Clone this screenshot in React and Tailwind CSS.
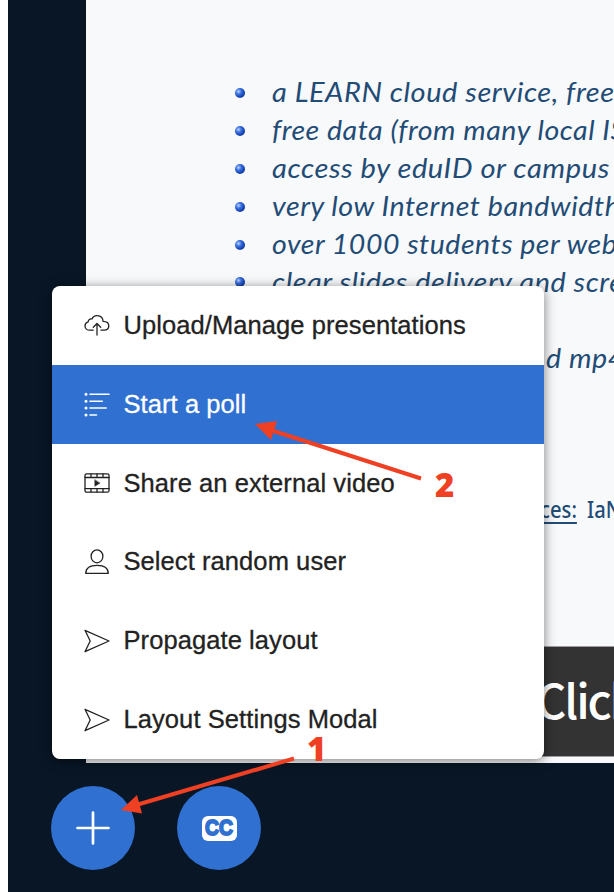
import React from "react";

const bullets = [
  { text: "a LEARN cloud service, free", scale: "scale-x-[1.093]" },
  { text: "free data (from many local IS", scale: "scale-x-[1.076]" },
  { text: "access by eduID or campus", scale: "scale-x-[1.098]" },
  { text: "very low Internet bandwidth", scale: "scale-x-[1.08]" },
  { text: "over 1000 students per web", scale: "scale-x-[1.074]" },
  { text: "clear slides delivery and scre", scale: "scale-x-[1.088]" },
];

function Icon({ children }) {
  return (
    <svg className="size-[26px] shrink-0" viewBox="0 0 26 26" fill="none" stroke="currentColor" strokeWidth="1.3" strokeLinecap="round" strokeLinejoin="round">
      {children}
    </svg>
  );
}

const Upload = () => (
  <Icon>
    <path d="M9.2 18.2H5.8C3 18.2 1 16.4 1 13.9c0-2 1.3-3.6 3.2-4.1.1-2.1 1.6-3.3 3.8-2.9C9 4.6 11 3.4 13.4 3.6c3.3.2 5.5 2.5 5.7 5.8 3.5.1 5.7 1.7 5.7 4.4 0 2.6-1.9 4.4-4.7 4.4H17M13 23V11.8M9.3 15.2 13 11.5l3.7 3.7" />
  </Icon>
);
const Poll = () => (
  <Icon>
    <path strokeWidth="1.6" d="M6 3.2h19M6 10.2h12.3M6 17h16.2M6 24h6.5" />
    <path strokeWidth="3" d="M2 3.2h.01M2 10.2h.01M2 17h.01M2 24h.01" />
  </Icon>
);
const Film = () => (
  <Icon>
    <rect x="1" y="3.8" width="24" height="18.4" rx="1.5" />
    <path d="M1 7.5h24M1 18.7h24M7 4v3.5M13 4v3.5M19 4v3.5M7 18.7V22M13 18.7V22M19 18.7V22" />
    <path fill="currentColor" strokeWidth=".5" d="M10.8 10v6.3l5-3.15z" />
  </Icon>
);
const User = () => (
  <Icon>
    <ellipse cx="13" cy="7.3" rx="5.9" ry="6.5" />
    <path strokeLinejoin="miter" d="M1.8 24.3c0-5 4-8 11.2-8s11.2 3 11.2 8z" />
  </Icon>
);
const Send = () => (
  <Icon>
    <path d="M1 2.3 25 13 1 23.7 6.2 13z" />
  </Icon>
);

const items = [
  { label: "Upload/Manage presentations", icon: Upload },
  { label: "Start a poll", icon: Poll, active: true },
  { label: "Share an external video", icon: Film },
  { label: "Select random user", icon: User },
  { label: "Propagate layout", icon: Send },
  { label: "Layout Settings Modal", icon: Send },
];

const slideText = "inline-block origin-left pb-[1px]";

function Slide() {
  return (
    <main className="ml-[78px] flex h-[763px] flex-col overflow-hidden whitespace-nowrap bg-[#f8f9fb] text-[#224c75]">
      <ul className="pl-[149px] pt-[74px] font-['Lato',sans-serif] text-[26.5px] italic leading-[38px] tracking-[0.5px]">
        {bullets.map(({ text, scale }) => (
          <li key={text} className="flex h-[37.9px] items-center">
            <span className="mr-[26.5px] size-[10px] shrink-0 rounded-full bg-[radial-gradient(circle_at_35%_35%,#b9d2ff_0,#3c72e0_30%,#1746b5_60%,#0c2468_100%)]" />
            <span className={`${slideText} ${scale}`}>{text}</span>
          </li>
        ))}
      </ul>
      <p className="mt-[38px] pl-[460px] font-['Lato',sans-serif] text-[26.5px] italic leading-[38px] tracking-[0.5px]">
        <span className={`${slideText} scale-x-[1.08]`}>d mp4</span>
      </p>
      <p className="mt-[112px] flex gap-[9px] pl-[446px] font-['Noto_Sans',sans-serif] text-[24px] font-medium leading-[38px]">
        <span className="w-[46px]">
          <span className="inline-block origin-left scale-x-[.84] underline decoration-2 underline-offset-[4px]">rces:</span>
        </span>
        <span className="inline-block origin-left scale-x-[.84]">IaN</span>
      </p>
      <div className="mt-auto mb-[6px] h-[111px] border-y border-[#a09ca2] bg-[#333] pl-[450px] font-['Noto_Sans_CJK_SC',sans-serif] text-[47px] font-medium leading-[104px] tracking-[-2.1px] text-white">
        Click
      </div>
    </main>
  );
}

export default function App() {
  return (
    <div className="relative h-[892px] w-[614px] overflow-hidden bg-white pl-2">
      <div className="flex h-full flex-col bg-[#081626]">
        <Slide />
        <footer className="flex gap-[42px] pl-[43px] pt-[23px]">
          <button className="flex size-[84px] items-center justify-center rounded-full bg-[#2f70d1]">
            <svg className="size-[34px]" viewBox="0 0 34 34" stroke="white" strokeWidth="2.7" strokeLinecap="round">
              <path d="M17 1.5v31M1.5 17h31" />
            </svg>
          </button>
          <button className="flex size-[84px] items-center justify-center rounded-full bg-[#2f70d1]">
            <span className="flex h-[25px] w-[35px] items-center justify-center rounded-[6px] bg-white font-['Liberation_Sans',sans-serif] text-[22px] font-bold leading-none text-[#2f70d1]">
              <span className="scale-x-[.88] [-webkit-text-stroke:1.8px_#2f70d1]">CC</span>
            </span>
          </button>
        </footer>
      </div>

      <nav className="absolute left-[52px] top-[286px] w-[492px] overflow-hidden rounded-[8px] bg-white shadow-[0_2px_12px_rgba(0,0,0,0.5)]">
        {items.map(({ label, icon: Glyph, active }) => (
          <div
            key={label}
            className={`flex h-[78.83px] items-center gap-[13.5px] whitespace-nowrap pl-8 font-['Liberation_Sans',Arial,sans-serif] text-[25.5px] tracking-[0.08px] ${active ? "bg-[#2f70d1] text-white" : "text-[#222]"}`}
          >
            <Glyph />
            <span className="pb-[0.8px] [-webkit-text-stroke:0.3px_currentColor]">{label}</span>
          </div>
        ))}
      </nav>

      <svg className="absolute inset-0 size-full" viewBox="0 0 614 892" fill="#ef4023" stroke="#ef4023">
        <path strokeWidth="4" fill="none" d="M421 478.5 272 430.5M294 758.5 138 804.5" />
        <path stroke="none" d="M255 424 277 421 271 440zM121 810 137 795 142 813.5z" />
      </svg>
      <span className="absolute left-[435px] top-[465px] font-['Open_Sans',sans-serif] text-[33px] font-extrabold leading-[40px] text-[#ef4023]">2</span>
      <span className="absolute left-[307px] top-[729px] font-['Open_Sans',sans-serif] text-[33px] font-extrabold leading-[40px] text-[#ef4023]">1</span>
    </div>
  );
}
